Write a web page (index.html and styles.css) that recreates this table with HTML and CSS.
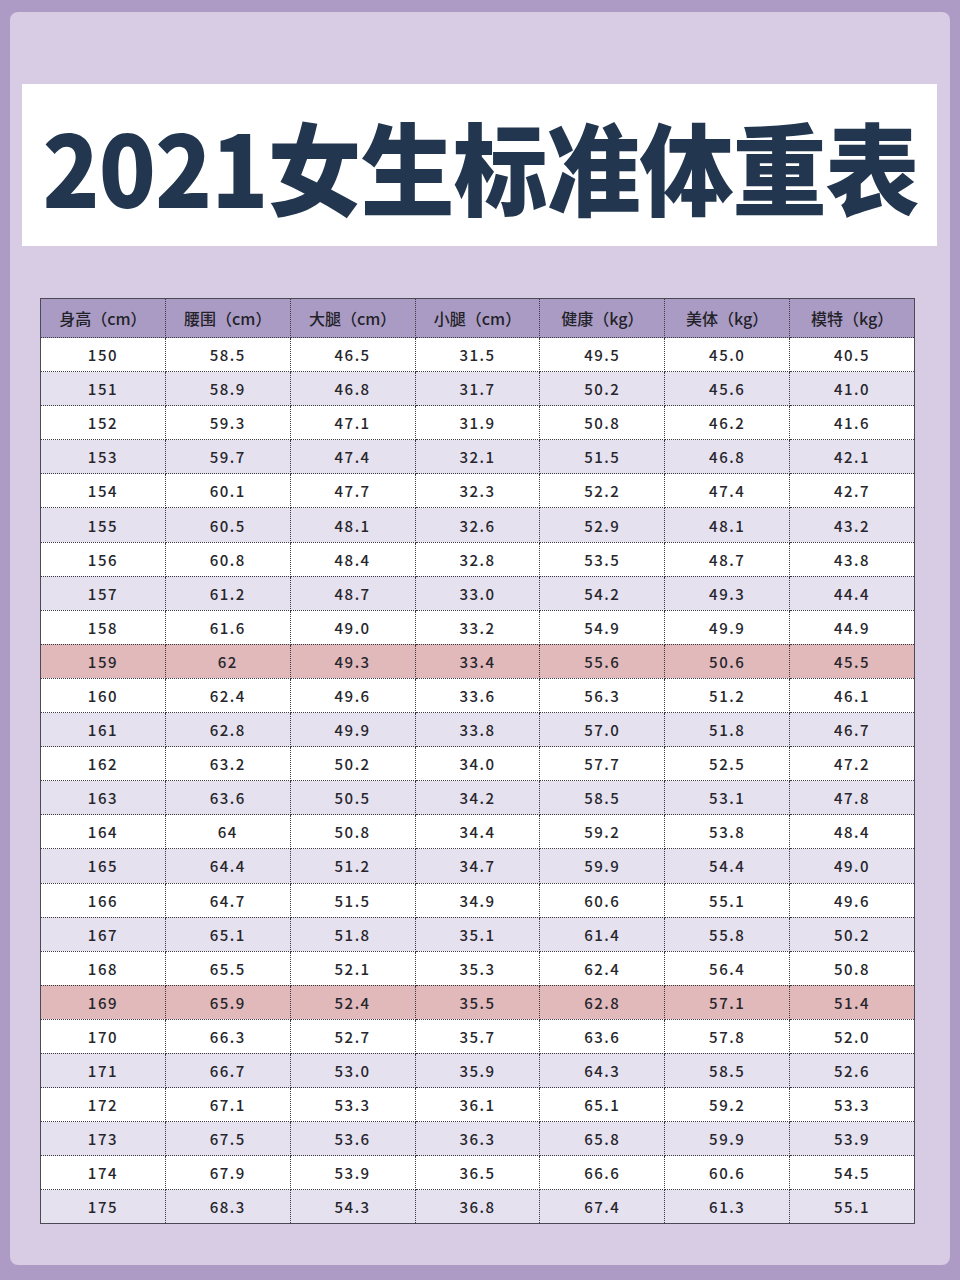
FILE: index.html
```html
<!DOCTYPE html>
<html lang="zh-CN">
<head>
<meta charset="utf-8">
<title>2021女生标准体重表</title>
<link rel="stylesheet" href="styles.css">
</head>
<body>
<div class="card">
  <div class="banner"><h1 class="title">2021女生标准体重表</h1></div>
  <table class="chart">
    <thead>
      <tr><th>身高（cm）</th><th>腰围（cm）</th><th>大腿（cm）</th><th>小腿（cm）</th><th>健康（kg）</th><th>美体（kg）</th><th>模特（kg）</th></tr>
    </thead>
    <tbody id="rows"></tbody>
  </table>
</div>
<script src="script.js"></script>
</body>
</html>
```
FILE: script.js
```js
var data = [
["150","58.5","46.5","31.5","49.5","45.0","40.5"],
["151","58.9","46.8","31.7","50.2","45.6","41.0"],
["152","59.3","47.1","31.9","50.8","46.2","41.6"],
["153","59.7","47.4","32.1","51.5","46.8","42.1"],
["154","60.1","47.7","32.3","52.2","47.4","42.7"],
["155","60.5","48.1","32.6","52.9","48.1","43.2"],
["156","60.8","48.4","32.8","53.5","48.7","43.8"],
["157","61.2","48.7","33.0","54.2","49.3","44.4"],
["158","61.6","49.0","33.2","54.9","49.9","44.9"],
["159","62","49.3","33.4","55.6","50.6","45.5"],
["160","62.4","49.6","33.6","56.3","51.2","46.1"],
["161","62.8","49.9","33.8","57.0","51.8","46.7"],
["162","63.2","50.2","34.0","57.7","52.5","47.2"],
["163","63.6","50.5","34.2","58.5","53.1","47.8"],
["164","64","50.8","34.4","59.2","53.8","48.4"],
["165","64.4","51.2","34.7","59.9","54.4","49.0"],
["166","64.7","51.5","34.9","60.6","55.1","49.6"],
["167","65.1","51.8","35.1","61.4","55.8","50.2"],
["168","65.5","52.1","35.3","62.4","56.4","50.8"],
["169","65.9","52.4","35.5","62.8","57.1","51.4"],
["170","66.3","52.7","35.7","63.6","57.8","52.0"],
["171","66.7","53.0","35.9","64.3","58.5","52.6"],
["172","67.1","53.3","36.1","65.1","59.2","53.3"],
["173","67.5","53.6","36.3","65.8","59.9","53.9"],
["174","67.9","53.9","36.5","66.6","60.6","54.5"],
["175","68.3","54.3","36.8","67.4","61.3","55.1"]
];
var tb = document.getElementById("rows");
data.forEach(function (r, i) {
  var tr = document.createElement("tr");
  var cls = i % 2 ? "alt" : "";
  if (r[0] === "159" || r[0] === "169") cls = "hl";
  if (cls) tr.className = cls;
  r.forEach(function (v) {
    var td = document.createElement("td");
    td.textContent = v;
    tr.appendChild(td);
  });
  tb.appendChild(tr);
});
```
FILE: styles.css
```css
html, body {
  margin: 0;
  padding: 0;
}
body {
  background: #ad9bc6;
  width: 960px;
  height: 1280px;
  padding-top: 12px;
  box-sizing: border-box;
}
.card {
  margin: 0 10px;
  height: 1253px;
  background: #d8cce5;
  border-radius: 8px;
  padding: 72px 13px 0 12px;
  box-sizing: border-box;
}
.banner {
  background: #ffffff;
  height: 162px;
  display: flex;
  align-items: center;
  justify-content: center;
}
.title {
  margin: 0;
  font-family: "Noto Sans CJK SC", "Noto Sans", sans-serif;
  font-weight: 900;
  font-size: 94px;
  line-height: 1;
  color: #22364f;
  letter-spacing: -1px;
  padding-left: 2px;
  white-space: nowrap;
  transform: scaleY(1.06);
}
.chart {
  margin: 52px 22px 0 18px;
  width: 875px;
  border-collapse: collapse;
  table-layout: fixed;
  border: 1.5px solid #4a4a52;
  font-family: "Noto Sans CJK SC", "Liberation Sans", sans-serif;
  color: #26262c;
}
.chart th, .chart td {
  border: 1px dotted #3a3a40;
  text-align: center;
  padding: 0;
}
.chart th {
  background: #aa9bc4;
  height: 38px;
  font-size: 16px;
  font-weight: 500;
  color: #222228;
}
.chart td {
  height: 33.1px;
  font-size: 15px;
  font-weight: 500;
  letter-spacing: 1.5px;
  background: #ffffff;
}
.chart tr.alt td {
  background: #e6e1ef;
}
.chart tr.hl td {
  background: #e1b9bb;
}
```
